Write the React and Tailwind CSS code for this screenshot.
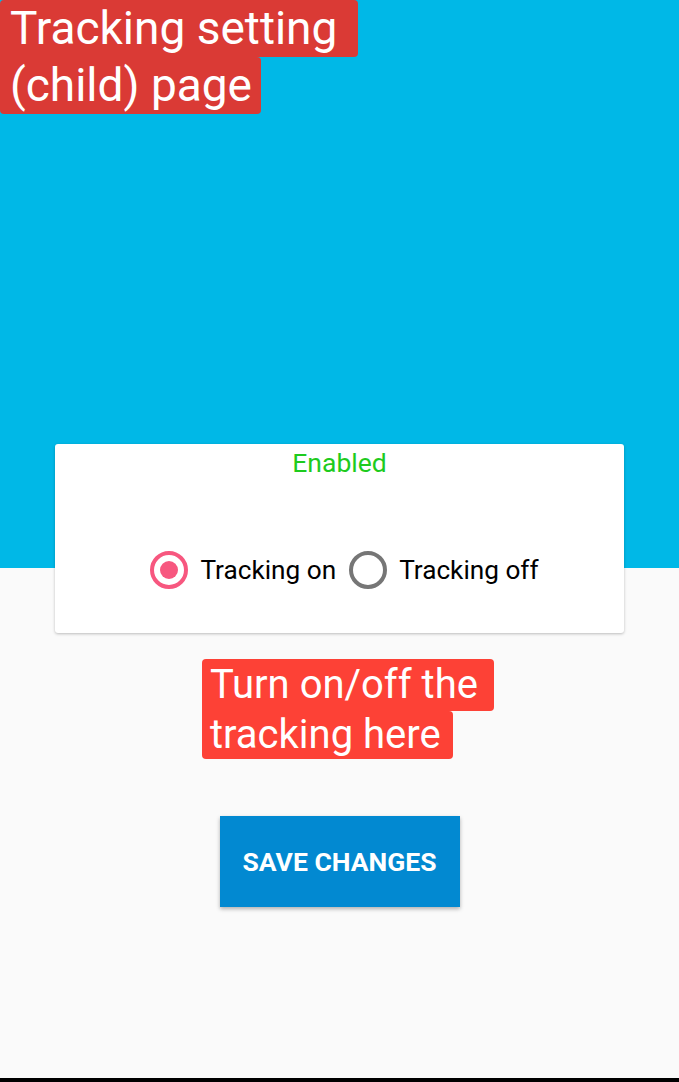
import React, { useState } from 'react';

const Radio = ({ checked, label, onClick }) => (
  <button type="button" onClick={onClick} className="flex items-center gap-[12px]">
    <span
      className={`flex h-[38px] w-[38px] items-center justify-center rounded-full border-[4px] ${
        checked ? 'border-[#f7577f]' : 'border-[#767676]'
      }`}
    >
      {checked && <span className="h-[18px] w-[18px] rounded-full bg-[#f7577f]" />}
    </span>
    <span className="text-[26.2px] leading-[30px] text-black">{label}</span>
  </button>
);

const App = () => {
  const [tracking, setTracking] = useState(true);

  return (
    <div
      className="flex h-[1082px] w-full flex-col bg-[linear-gradient(to_bottom,#00b8e7_568px,#fafafa_568px)]"
      style={{ fontFamily: 'Roboto, "Noto Sans", sans-serif' }}
    >
      {/* screen title tag */}
      <div className="flex flex-col items-start text-white">
        <div className="rounded-[4px] rounded-bl-none bg-[#da3a35] pl-[10px] pr-[21px] text-[46px] leading-[57px]">
          Tracking setting
        </div>
        <div className="rounded-[4px] rounded-tl-none bg-[#da3a35] pl-[10px] pr-[9px] text-[46px] leading-[57px]">
          (child) page
        </div>
      </div>

      <div className="mx-[55px] mt-[330px] flex h-[189px] flex-col items-center rounded-[3px] bg-white pt-[5px] shadow-[0_1px_3px_rgba(0,0,0,0.25)]">
        <div className="text-[26.5px] leading-[28px] text-[#1ecb1e]">{tracking ? 'Enabled' : 'Disabled'}</div>
        <div className="mt-[74px] flex items-center gap-[13px] pl-[10px]">
          <Radio checked={tracking} label="Tracking on" onClick={() => setTracking(true)} />
          <Radio checked={!tracking} label="Tracking off" onClick={() => setTracking(false)} />
        </div>
      </div>

      <div className="mt-[26px] ml-[202px] flex flex-col items-start text-white">
        <div className="rounded-[4px] rounded-bl-none bg-[#fd4136] pl-[8px] pr-[16px] text-[40px] leading-[52px]">
          Turn on/off the
        </div>
        <div className="rounded-[4px] rounded-tl-none bg-[#fd4136] pl-[8px] pr-[12px] text-[40px] leading-[48px]">
          tracking here
        </div>
      </div>

      <div className="mt-[57px] flex justify-center">
        <button
          type="button"
          className="h-[91px] w-[240px] bg-[#0289d1] text-[26.5px] font-bold text-white shadow-[0_2px_4px_rgba(0,0,0,0.3)]"
        >
          SAVE CHANGES
        </button>
      </div>

      <div className="flex-1" />
      <div className="h-[4px] bg-black" />
    </div>
  );
};

export default App;
